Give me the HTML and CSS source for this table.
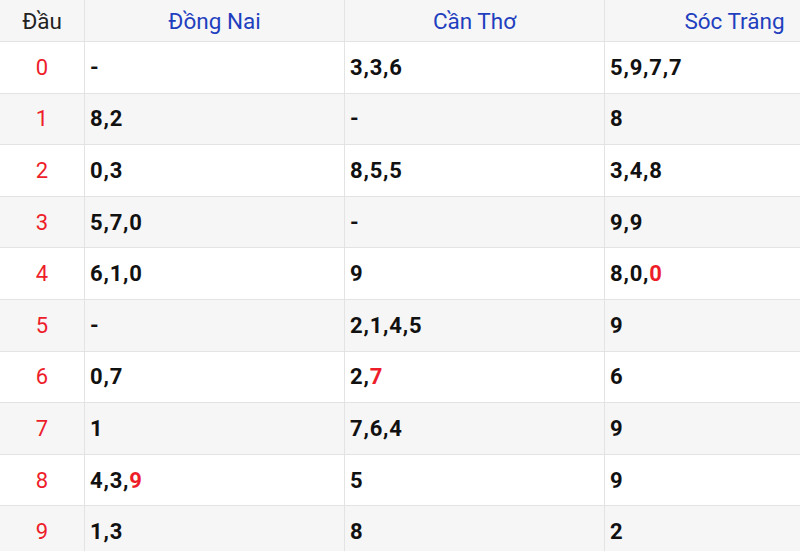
FILE: index.html
```html
<!DOCTYPE html>
<html lang="vi">
<head>
<meta charset="utf-8">
<title>Loto đầu</title>
<link rel="stylesheet" href="styles.css">
</head>
<body>
<div class="wrap">
<table class="loto">
  <colgroup>
    <col class="c-head">
    <col class="c-prov">
    <col class="c-prov">
    <col class="c-prov">
  </colgroup>
  <thead>
    <tr>
      <th class="h-dau">Đầu</th>
      <th class="h-prov">Đồng Nai</th>
      <th class="h-prov">Cần Thơ</th>
      <th class="h-prov">Sóc Trăng</th>
    </tr>
  </thead>
  <tbody>
    <tr><td class="dau">0</td><td>-</td><td>3,3,6</td><td>5,9,7,7</td></tr>
    <tr><td class="dau">1</td><td>8,2</td><td>-</td><td>8</td></tr>
    <tr><td class="dau">2</td><td>0,3</td><td>8,5,5</td><td>3,4,8</td></tr>
    <tr><td class="dau">3</td><td>5,7,0</td><td>-</td><td>9,9</td></tr>
    <tr><td class="dau">4</td><td>6,1,0</td><td>9</td><td>8,0,<span class="hl">0</span></td></tr>
    <tr><td class="dau">5</td><td>-</td><td>2,1,4,5</td><td>9</td></tr>
    <tr><td class="dau">6</td><td>0,7</td><td>2,<span class="hl">7</span></td><td>6</td></tr>
    <tr><td class="dau">7</td><td>1</td><td>7,6,4</td><td>9</td></tr>
    <tr><td class="dau">8</td><td>4,3,<span class="hl">9</span></td><td>5</td><td>9</td></tr>
    <tr><td class="dau">9</td><td>1,3</td><td>8</td><td>2</td></tr>
  </tbody>
</table>
</div>
</body>
</html>
```

FILE: styles.css
```css
html, body {
  margin: 0;
  padding: 0;
  background: #fff;
}
body {
  overflow: hidden;
  font-family: Roboto, "Liberation Sans", Arial, sans-serif;
}
.wrap {
  width: 800px;
  height: 551px;
  overflow: hidden;
}
.loto {
  border-collapse: collapse;
  table-layout: fixed;
  width: 864px;
  margin-left: -1px;
  margin-top: -1px;
}
.c-head { width: 85px; }
.c-prov { width: 260px; }
.loto th,
.loto td {
  border: 1.5px solid #e3e3e3;
}
.loto th {
  height: 41px;
  padding: 0;
  font-weight: 400;
  font-size: 22.5px;
  text-align: center;
  background: #f6f6f6;
}
.h-dau { color: #222; }
.h-prov { color: #1f3fbf; }
.loto td {
  height: 50.6px;
  padding: 0 0 0 5px;
  font-size: 22px;
  letter-spacing: 0.8px;
  font-weight: 700;
  color: #111;
  text-align: left;
}
.loto td.dau {
  padding: 0;
  text-align: center;
  font-weight: 400;
  letter-spacing: 0;
  color: #ee1d2a;
}
.loto tbody tr:nth-child(even) td {
  background: #f6f6f6;
}
.hl { color: #ee1d2a; }
```
